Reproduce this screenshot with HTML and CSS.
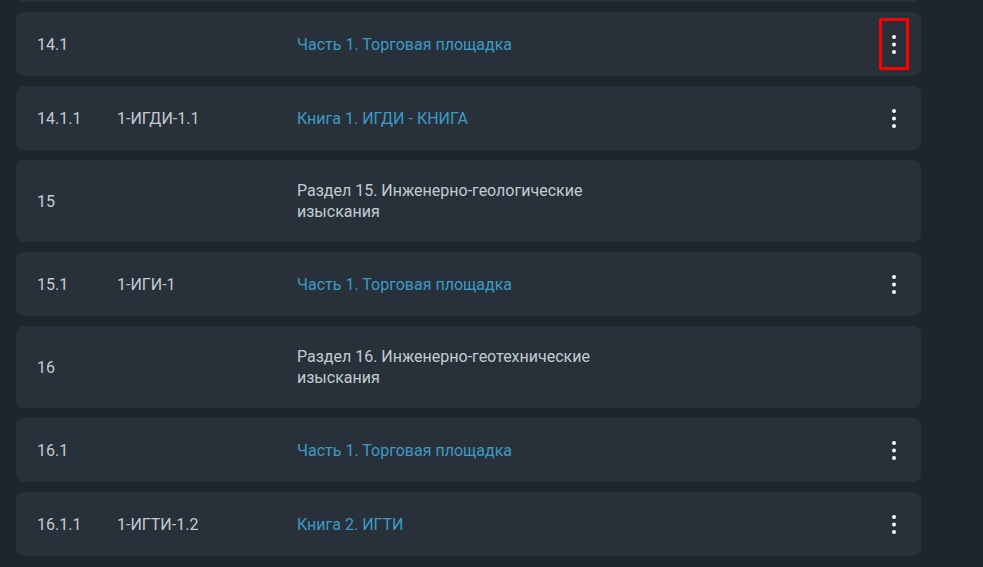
FILE: index.html
```html
<!DOCTYPE html>
<html lang="ru">
<head>
<meta charset="utf-8">
<title>Разделы</title>
<link rel="stylesheet" href="styles.css">
</head>
<body>
<div class="list">
  <div class="row"></div>
  <div class="row">
    <div class="c num">14.1</div>
    <div class="c code"></div>
    <div class="c title link">Часть 1. Торговая площадка</div>
    <div class="spacer"></div>
    <button class="kebab selected" type="button" aria-label="Меню"><svg width="4" height="19" viewBox="0 0 4 19"><circle cx="2" cy="2" r="2"/><circle cx="2" cy="9.5" r="2"/><circle cx="2" cy="17" r="2"/></svg></button>
  </div>
  <div class="row">
    <div class="c num">14.1.1</div>
    <div class="c code">1-ИГДИ-1.1</div>
    <div class="c title link">Книга 1. ИГДИ - КНИГА</div>
    <div class="spacer"></div>
    <button class="kebab" type="button" aria-label="Меню"><svg width="4" height="19" viewBox="0 0 4 19"><circle cx="2" cy="2" r="2"/><circle cx="2" cy="9.5" r="2"/><circle cx="2" cy="17" r="2"/></svg></button>
  </div>
  <div class="row">
    <div class="c num">15</div>
    <div class="c code"></div>
    <div class="c title">Раздел 15. Инженерно-геологические изыскания</div>
    <div class="spacer"></div>
  </div>
  <div class="row">
    <div class="c num">15.1</div>
    <div class="c code">1-ИГИ-1</div>
    <div class="c title link">Часть 1. Торговая площадка</div>
    <div class="spacer"></div>
    <button class="kebab" type="button" aria-label="Меню"><svg width="4" height="19" viewBox="0 0 4 19"><circle cx="2" cy="2" r="2"/><circle cx="2" cy="9.5" r="2"/><circle cx="2" cy="17" r="2"/></svg></button>
  </div>
  <div class="row">
    <div class="c num">16</div>
    <div class="c code"></div>
    <div class="c title">Раздел 16. Инженерно-геотехнические изыскания</div>
    <div class="spacer"></div>
  </div>
  <div class="row">
    <div class="c num">16.1</div>
    <div class="c code"></div>
    <div class="c title link">Часть 1. Торговая площадка</div>
    <div class="spacer"></div>
    <button class="kebab" type="button" aria-label="Меню"><svg width="4" height="19" viewBox="0 0 4 19"><circle cx="2" cy="2" r="2"/><circle cx="2" cy="9.5" r="2"/><circle cx="2" cy="17" r="2"/></svg></button>
  </div>
  <div class="row">
    <div class="c num">16.1.1</div>
    <div class="c code">1-ИГТИ-1.2</div>
    <div class="c title link">Книга 2. ИГТИ</div>
    <div class="spacer"></div>
    <button class="kebab" type="button" aria-label="Меню"><svg width="4" height="19" viewBox="0 0 4 19"><circle cx="2" cy="2" r="2"/><circle cx="2" cy="9.5" r="2"/><circle cx="2" cy="17" r="2"/></svg></button>
  </div>
</div>
</body>
</html>
```
FILE: styles.css
```css
html, body {
  margin: 0;
  padding: 0;
  background: #1e252b;
  height: 100%;
  overflow: hidden;
}
body {
  font-family: Roboto, "Noto Sans", sans-serif;
  font-size: 16px;
  line-height: 21px;
  color: #c3cbd2;
}
.list {
  display: flex;
  flex-direction: column;
  gap: 10px;
  width: 905px;
  margin: -62px 0 0 16px;
}
.row {
  display: flex;
  align-items: center;
  min-height: 64px;
  box-sizing: border-box;
  padding: 0 15px 0 21px;
  background: #283139;
  border-radius: 8px;
}
.c {
  padding: 20px 0;
}
.num { width: 80px; flex: none; }
.code { width: 180px; flex: none; }
.title { width: 300px; flex: none; }
.link { color: #3d9ac6; }
.spacer { flex: 1; }
.kebab {
  width: 24px;
  height: 46px;
  padding: 0;
  margin: 0;
  border: 0;
  background: transparent;
  display: flex;
  align-items: center;
  justify-content: center;
  fill: #ffffff;
}
.kebab.selected {
  outline: 3px solid #ff0000;
  outline-offset: 0;
}
```
